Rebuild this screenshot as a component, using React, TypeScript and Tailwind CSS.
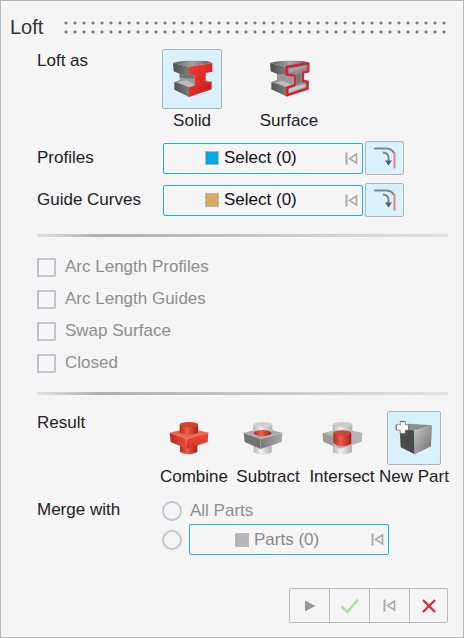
import type { ReactNode } from "react";

function SolidIcon() {
  return (
    <svg viewBox="67 64 123 114" width="41" height="38" aria-hidden="true">
      <defs>
        <linearGradient id="steel" x1="0" x2="1" y1="0" y2="0">
          <stop offset="0" stopColor="#4e4e4e" />
          <stop offset="1" stopColor="#8d8d8d" />
        </linearGradient>
        <linearGradient id="steelTop" x1="0" x2="1" y1="0" y2="0">
          <stop offset="0" stopColor="#5e5e5e" />
          <stop offset="0.5" stopColor="#a2a2a2" />
          <stop offset="1" stopColor="#5e5e5e" />
        </linearGradient>
        <linearGradient id="redFace" x1="0" x2="1" y1="0" y2="1">
          <stop offset="0" stopColor="#ef3f38" />
          <stop offset="0.5" stopColor="#e12a26" />
          <stop offset="1" stopColor="#bb191c" />
        </linearGradient>
      </defs>
      <path d="M70 73 L118 84 L118 107 L136 110 L136 142 L118 175 L74 153 L74 131 L92 124 L92 106 L72 98Z" fill="url(#steel)" />
      <path d="M90 106 L118 107 L134 110 L134 142 L118 146 L76 131 L90 125Z" fill="#9c9c9c" />
      <path d="M90 106 L134 108 L134 120 L90 117Z" fill="#757575" />
      <path d="M84 130 L112 125 L134 138 L118 146Z" fill="#bdbdbd" />
      <path d="M70 73 Q80 67 120 66 L172 67 L188 73 L118 84Z" fill="url(#steelTop)" />
      <path d="M118 84 L188 73 L188 99 L168 103 L168 128 L186 129 L186 152 L118 175 L118 147 L136 141 L136 110 L118 107Z" fill="url(#redFace)" />
    </svg>
  );
}

function SurfaceIcon() {
  return (
    <svg viewBox="355 61 123 114" width="41" height="38" aria-hidden="true">
      <path d="M358 70 L406 81 L406 104 L424 107 L424 139 L406 170 L362 149 L362 128 L380 121 L380 103 L360 95Z" fill="url(#steel)" />
      <path d="M380 103 L406 104 L428 107 L428 138 L406 143 L364 128 L380 122Z" fill="#999" />
      <path d="M374 128 L400 124 L424 136 L408 142Z" fill="#bdbdbd" />
      <path d="M358 70 Q370 64 410 63 L460 64 L476 70 L406 81Z" fill="url(#steelTop)" />
      <path
        d="M408 82 L473 71 L473 95 L457 99 L457 124 L471 126 L471 147 L409 167 L409 144 L432 137 L432 108 L408 105Z"
        fill="#8f8f8f"
        stroke="#d6202b"
        strokeWidth="7"
        strokeLinejoin="round"
      />
      <path d="M414 88 L466 78 L466 83 L418 98Z" fill="#a5a5a5" />
      <path d="M437 104 L450 99 L450 127 L437 134Z" fill="#777" />
      <path d="M415 148 L438 138 L464 133 L464 142 L415 159Z" fill="#c4c4c4" />
    </svg>
  );
}

function CombineIcon() {
  return (
    <svg viewBox="55 61 120 105" width="40" height="35" aria-hidden="true">
      <defs>
        <linearGradient id="redTube" x1="0" x2="1" y1="0" y2="0">
          <stop offset="0" stopColor="#b32a1e" />
          <stop offset="0.4" stopColor="#ee5a48" />
          <stop offset="1" stopColor="#a3221a" />
        </linearGradient>
        <linearGradient id="redLeft" x1="0" x2="1" y1="0" y2="0">
          <stop offset="0" stopColor="#b42c20" />
          <stop offset="1" stopColor="#e9503f" />
        </linearGradient>
        <linearGradient id="redRight" x1="0" x2="0" y1="0" y2="1">
          <stop offset="0" stopColor="#ee4f3c" />
          <stop offset="1" stopColor="#d03424" />
        </linearGradient>
      </defs>
      <path d="M88 130 V154 Q114 168 140 154 V130Z" fill="url(#redTube)" />
      <path d="M57 96 L88 89 L142 89 L173 96 L108 114Z" fill="#ee6451" />
      <path d="M57 96 L108 114 L108 144 L60 124Z" fill="url(#redLeft)" />
      <path d="M108 114 L173 96 L171 124 L108 144Z" fill="url(#redRight)" />
      <path d="M57 96 L108 114 L173 96" fill="none" stroke="#f27a69" strokeWidth="2" />
      <path d="M87 72 V96 Q114 107 142 96 V72Z" fill="url(#redTube)" />
      <ellipse cx="114.500" cy="72" rx="27.500" ry="8" fill="#d8402f" />
    </svg>
  );
}

function SubtractIcon() {
  return (
    <svg viewBox="278 61 120 105" width="40" height="35" aria-hidden="true">
      <defs>
        <linearGradient id="glassTube" x1="0" x2="1" y1="0" y2="0">
          <stop offset="0" stopColor="#b5b5b5" />
          <stop offset="0.4" stopColor="#f0f0f0" />
          <stop offset="1" stopColor="#b0b0b0" />
        </linearGradient>
        <linearGradient id="greyFace" x1="0" x2="1" y1="0" y2="0">
          <stop offset="0" stopColor="#7a7a7a" />
          <stop offset="1" stopColor="#a8a8a8" />
        </linearGradient>
      </defs>
      <path d="M310 132 V155 Q337 168 364 155 V132Z" fill="url(#glassTube)" />
      <path d="M280 96 L311 89 L365 89 L396 96 L331 114Z" fill="#a9a9a9" />
      <path d="M280 96 L331 114 L331 145 L283 124Z" fill="#747474" />
      <path d="M331 114 L396 96 L394 124 L331 145Z" fill="url(#greyFace)" />
      <path d="M280 96 L331 114 L396 96" fill="none" stroke="#c4c4c4" strokeWidth="2" />
      <path d="M309 72 V94 Q337 102 366 94 V72Z" fill="url(#glassTube)" />
      <ellipse cx="337.500" cy="72" rx="28" ry="8" fill="#d2d2d2" />
      <ellipse cx="337" cy="97" rx="27" ry="9" fill="url(#redTube)" />
    </svg>
  );
}

function IntersectIcon() {
  return (
    <svg viewBox="64 61 123 105" width="41" height="35" aria-hidden="true">
      <path d="M97 132 V155 Q126 168 154 155 V132Z" fill="url(#glassTube)" />
      <path d="M66 97 L97 90 L155 90 L185 96 L183 123 L120 144 L68 123Z" fill="#b5b5b5" />
      <path d="M66 97 L98 108 V136 L68 123Z" fill="#9c9c9c" />
      <path d="M96 72 V98 Q126 106 155 98 V72Z" fill="url(#glassTube)" />
      <ellipse cx="125.500" cy="72" rx="29" ry="8" fill="#cacaca" />
      <path d="M98 98 V128 Q122 145 152 130 V98Z" fill="url(#redTube)" />
      <ellipse cx="125" cy="97" rx="27" ry="8" fill="#c8463b" />
    </svg>
  );
}

function NewPartIcon() {
  return (
    <svg viewBox="283 60 120 108" width="40" height="36" aria-hidden="true">
      <defs>
        <linearGradient id="cubeRight" x1="0" x2="1" y1="0" y2="1">
          <stop offset="0" stopColor="#c9c9c9" />
          <stop offset="1" stopColor="#6b6b6b" />
        </linearGradient>
      </defs>
      <path d="M300 82 L330 71 L397 76 L344 92Z" fill="#8f8f8f" />
      <path d="M300 82 L344 92 L345 163 L303 142Z" fill="#4b4b4b" />
      <path d="M344 92 L397 76 L394 139 L345 163Z" fill="url(#cubeRight)" />
      <path
        d="M303 65 H316 V76 H327 V89 H316 V100 H303 V89 H290 V76 H303Z"
        fill="#fff"
        stroke="#7a7a7a"
        strokeWidth="5"
        strokeLinejoin="round"
      />
      <path d="M303 67 H316 V76 H325 V89 H316 V98 H303 V89 H292 V76 H303Z" fill="#fff" />
    </svg>
  );
}

function ResetIcon({ className }: { className: string }) {
  return (
    <svg viewBox="0 0 13 13" width="13" height="13" className={className} fill="none" stroke="currentColor" aria-hidden="true">
      <path d="M1.500 0.500V12.500" strokeWidth="2" />
      <path d="M11.500 2V11L4.500 6.500Z" strokeWidth="1.600" />
    </svg>
  );
}

function EdgeIcon() {
  return (
    <svg viewBox="0 0 22 22" width="22" height="22" fill="none" aria-hidden="true">
      <path d="M0 1.500H13Q18 2 20 6" stroke="#7f8a8e" strokeWidth="2" />
      <path d="M20.500 5V21.500" stroke="#f08080" strokeWidth="2" />
      <path d="M9 5.500Q14.500 6 14.500 11V14" stroke="#7f8a8e" strokeWidth="2" />
      <path d="M11 13.500H18L14.500 18.500Z" fill="#555e62" />
    </svg>
  );
}

function Collector({ label, swatch, muted }: { label: string; swatch: string; muted?: boolean }) {
  return (
    <div className={`flex h-[31px] w-[200px] items-center rounded-[2px] border border-[#1eb0e6] ${muted ? "text-[#8a8a8a]" : "text-[#111]"}`}>
      <button type="button" className={`flex h-full flex-1 items-center gap-[5px] ${muted ? "pl-[45px]" : "pl-[41px]"}`}>
        <span className={`size-[14px] border border-[#b9b9b9] ${swatch}`} />
        {label}
      </button>
      <button type="button" aria-label="Reset selection" className="mr-1">
        <ResetIcon className="text-[#ababab]" />
      </button>
    </div>
  );
}

function SelectRow({ title, swatch }: { title: string; swatch: string }) {
  return (
    <div className="grid grid-cols-[126px_1fr] items-center">
      <span>{title}</span>
      <div className="flex items-center gap-[2px]">
        <Collector label="Select (0)" swatch={swatch} />
        <button
          type="button"
          aria-label={`${title} edge options`}
          className="flex h-[34px] w-[39px] items-center justify-center rounded-[2px] border border-[#b0b5b8] bg-[#d9f1fb]"
        >
          <EdgeIcon />
        </button>
      </div>
    </div>
  );
}

function Choice({ label, icon, frame, width }: { label: string; icon: ReactNode; frame: string; width: string }) {
  return (
    <button type="button" className={`flex flex-col items-center gap-[2px] whitespace-nowrap ${width}`}>
      <span className={`flex items-center justify-center rounded-[2px] border ${frame}`}>{icon}</span>
      {label}
    </button>
  );
}

function Divider() {
  return (
    <div
      role="separator"
      className="h-[3px] bg-linear-to-r from-[#e2e2e2] via-[#b0b0b0] via-15% to-[#e2e2e2]"
    />
  );
}

const options = ["Arc Length Profiles", "Arc Length Guides", "Swap Surface", "Closed"];
const radio = "size-5 shrink-0 appearance-none rounded-full border-2 border-[#c3c7ce] bg-[#f5f5f5]";
const plain = "border-transparent";
const active = "border-[#b0b5b8] bg-[#d9f1fb]";

export default function App() {
  return (
    <main className="min-h-screen border border-[#b8b8b8] bg-[#f5f5f5] pt-[14px] pb-[14px] font-['Liberation_Sans',Arial,sans-serif] text-[17px] leading-5 text-[#222]">
      <header className="flex items-center gap-[18px] pr-[14px] pl-[9px]">
        <h1 className="text-[20px] leading-6 text-[#333]">Loft</h1>
        <div className="h-[18px] flex-1 bg-[radial-gradient(circle_at_5px_5px,#7c7c7c_1px,transparent_2px)] bg-[size:9px_9px]" />
      </header>

      <div className="pr-[15px] pl-9">
        <section className="mt-[10px] grid grid-cols-[125px_1fr]">
          <span className="pt-[2px]">Loft as</span>
          <div className="flex gap-[37px]">
            <Choice label="Solid" icon={<SolidIcon />} width="w-[60px]" frame={`size-[60px] ${active}`} />
            <Choice label="Surface" icon={<SurfaceIcon />} width="w-[60px]" frame={`size-[60px] ${plain}`} />
          </div>
        </section>

        <section className="mt-[10px] mb-[17px] flex flex-col gap-2">
          <SelectRow title="Profiles" swatch="bg-[#00a8e8]" />
          <SelectRow title="Guide Curves" swatch="bg-[#d6a860]" />
        </section>

        <Divider />

        <section className="mt-5 mb-[19px] flex flex-col items-start gap-3">
          {options.map((option) => (
            <label key={option} className="flex items-center gap-[9px] text-[#8f8f8f]">
              <input type="checkbox" disabled className="size-[19px] appearance-none rounded-[1px] border-2 border-[#c0c4cb] bg-[#f5f5f5]" />
              {option}
            </label>
          ))}
        </section>

        <Divider />

        <section className="mt-4 grid grid-cols-[120px_1fr]">
          <span className="pt-[2px]">Result</span>
          <div className="flex">
            <Choice label="Combine" icon={<CombineIcon />} width="w-[74px]" frame={`size-[54px] pr-[11px] ${plain}`} />
            <Choice label="Subtract" icon={<SubtractIcon />} width="w-[74px]" frame={`size-[54px] pr-[11px] ${plain}`} />
            <Choice label="Intersect" icon={<IntersectIcon />} width="w-[74px]" frame={`size-[54px] ${plain}`} />
            <Choice label="New Part" icon={<NewPartIcon />} width="w-[70px]" frame={`size-[54px] ${active}`} />
          </div>
        </section>

        <section className="mt-[13px] grid grid-cols-[125px_1fr]">
          <span>Merge with</span>
          <div className="flex flex-col gap-[3px] pt-px">
            <label className="flex items-center gap-2 text-[#8f8f8f]">
              <input type="radio" name="merge" disabled className={radio} />
              All Parts
            </label>
            <div className="flex items-center gap-[7px]">
              <input type="radio" name="merge" disabled aria-label="Selected parts" className={radio} />
              <Collector label="Parts (0)" swatch="bg-[#b5b5b5]" muted />
            </div>
          </div>
        </section>

        <footer className="mt-[33px] flex justify-end">
          <div className="flex h-[35px] divide-x divide-[#bdbdbd] rounded-[2px] border border-[#bdbdbd]">
            <button type="button" aria-label="Play" className="flex w-10 items-center justify-center">
              <svg viewBox="0 0 12 12" width="12" height="12" aria-hidden="true">
                <path d="M1 0.500L11.500 6L1 11.500Z" fill="#9a9a9a" />
              </svg>
            </button>
            <button type="button" aria-label="Apply" className="flex w-10 items-center justify-center">
              <svg viewBox="0 0 20 16" width="20" height="16" fill="none" aria-hidden="true">
                <path d="M1.500 8.500L7.500 14L18 1.500" stroke="#aee0a2" strokeWidth="2.400" />
              </svg>
            </button>
            <button type="button" aria-label="Reset" className="flex w-10 items-center justify-center">
              <ResetIcon className="text-[#ababab]" />
            </button>
            <button type="button" aria-label="Cancel" className="flex w-[37px] items-center justify-center">
              <svg viewBox="0 0 14 14" width="14" height="14" fill="none" aria-hidden="true">
                <path d="M1 1L13 13M13 1L1 13" stroke="#dc2443" strokeWidth="2.200" />
              </svg>
            </button>
          </div>
        </footer>
      </div>
    </main>
  );
}
